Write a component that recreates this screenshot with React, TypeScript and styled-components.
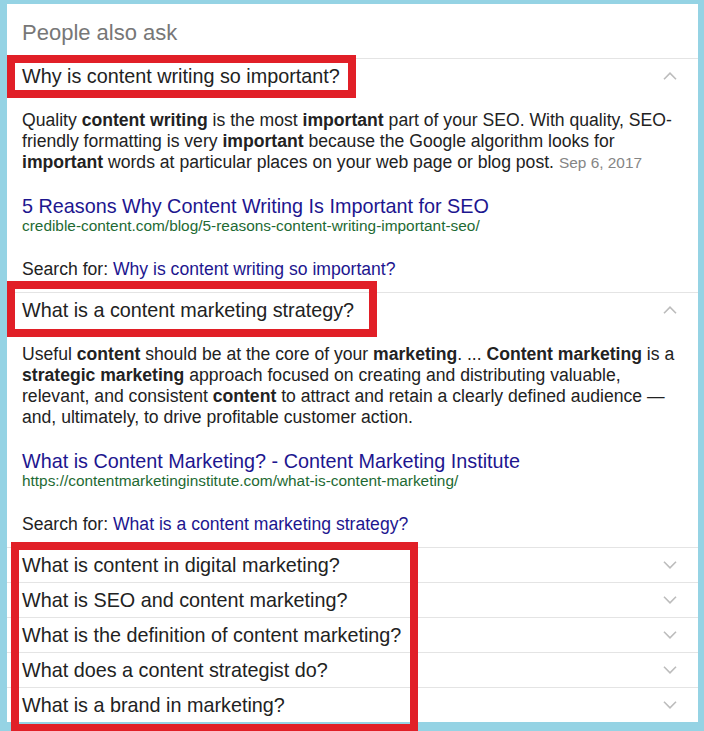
import React from "react";
import styled, { createGlobalStyle } from "styled-components";

const GlobalStyle = createGlobalStyle`
  html, body {
    margin: 0;
    padding: 0;
    background: #95d3e4;
  }
  body {
    font-family: "Liberation Sans", Arial, sans-serif;
  }
`;

const Page = styled.div`
  box-sizing: border-box;
  min-height: 731px;
  padding: 4px 6px 8px 7px;
`;

const Panel = styled.section`
  position: relative;
  background: #ffffff;
`;

const Header = styled.h2`
  margin: 0;
  padding: 16px 15px 12px;
  font-size: 22px;
  line-height: 26px;
  font-weight: normal;
  color: #777777;
  border-bottom: 1px solid #e4e4e4;
`;

const Item = styled.div<{ $last?: boolean }>`
  border-bottom: ${(p) => (p.$last ? "none" : "1px solid #e4e4e4")};
`;

const QuestionRow = styled.div`
  display: flex;
  align-items: center;
  justify-content: space-between;
  height: 34px;
  padding: 0 21px 0 15px;
`;

const QuestionText = styled.span`
  position: relative;
  display: inline-block;
  font-size: 19.8px;
  line-height: 34px;
  color: #222222;
  white-space: nowrap;
`;

const Mark = styled.span<{ $t: number; $r: number; $b: number; $l: number }>`
  position: absolute;
  top: ${(p) => p.$t}px;
  right: ${(p) => p.$r}px;
  bottom: ${(p) => p.$b}px;
  left: ${(p) => p.$l}px;
  border: 8px solid #e11f27;
  pointer-events: none;
`;

const Chevron = styled.svg`
  display: block;
  width: 14px;
  height: 8px;
  flex: none;
`;

const Answer = styled.div`
  padding: 17px 18px 12px 15px;
  font-size: 17.6px;
  line-height: 21px;
  color: #222222;
`;

const Snippet = styled.p`
  margin: 0;
  b {
    font-weight: bold;
  }
`;

const DateStamp = styled.span`
  margin-left: 5px;
  font-size: 15.4px;
  color: #858585;
`;

const SourceTitle = styled.a`
  display: block;
  margin-top: 22px;
  font-size: 19.8px;
  line-height: 22px;
  color: #1d168f;
  text-decoration: none;
`;

const SourceUrl = styled.div`
  font-size: 15.4px;
  line-height: 18px;
  color: #1e6a33;
`;

const SearchFor = styled.div`
  margin-top: 24px;
  a {
    color: #1d168f;
    text-decoration: none;
  }
`;

const CollapsedGroup = styled.div`
  position: relative;
`;

type MarkBox = { t: number; r: number; b: number; l: number };

const ChevronIcon = ({ up }: { up?: boolean }) => (
  <Chevron viewBox="0 0 14 8">
    <polyline
      points={up ? "1,7.2 7,1.2 13,7.2" : "1,0.8 7,6.8 13,0.8"}
      fill="none"
      stroke="#bcbcbc"
      strokeWidth="1.6"
    />
  </Chevron>
);

const Question = ({
  text,
  up,
  mark,
}: {
  text: string;
  up?: boolean;
  mark?: MarkBox;
}) => (
  <QuestionRow>
    <QuestionText>
      {text}
      {mark && <Mark $t={mark.t} $r={mark.r} $b={mark.b} $l={mark.l} />}
    </QuestionText>
    <ChevronIcon up={up} />
  </QuestionRow>
);

const collapsed = [
  "What is content in digital marketing?",
  "What is SEO and content marketing?",
  "What is the definition of content marketing?",
  "What does a content strategist do?",
  "What is a brand in marketing?",
];

export default function App() {
  return (
    <>
      <GlobalStyle />
      <Page>
        <Panel>
          <Header>People also ask</Header>

          <Item>
            <Question
              text="Why is content writing so important?"
              up
              mark={{ t: -4, r: -16, b: -5, l: -15 }}
            />
            <Answer>
              <Snippet>
                Quality <b>content writing</b> is the most <b>important</b> part of your SEO. With
                quality, SEO-friendly formatting is very <b>important</b> because the Google
                algorithm looks for <b>important</b> words at particular places on your web page or
                blog post.<DateStamp>Sep 6, 2017</DateStamp>
              </Snippet>
              <SourceTitle href="#">5 Reasons Why Content Writing Is Important for SEO</SourceTitle>
              <SourceUrl>credible-content.com/blog/5-reasons-content-writing-important-seo/</SourceUrl>
              <SearchFor>
                Search for: <a href="#">Why is content writing so important?</a>
              </SearchFor>
            </Answer>
          </Item>

          <Item>
            <Question
              text="What is a content marketing strategy?"
              up
              mark={{ t: -12, r: -23, b: -10, l: -15 }}
            />
            <Answer>
              <Snippet>
                Useful <b>content</b> should be at the core of your <b>marketing</b>. ...{" "}
                <b>Content marketing</b> is a <b>strategic marketing</b> approach focused on
                creating and distributing valuable, relevant, and consistent <b>content</b> to
                attract and retain a clearly defined audience — and, ultimately, to drive
                profitable customer action.
              </Snippet>
              <SourceTitle href="#">What is Content Marketing? - Content Marketing Institute</SourceTitle>
              <SourceUrl>https://contentmarketinginstitute.com/what-is-content-marketing/</SourceUrl>
              <SearchFor>
                Search for: <a href="#">What is a content marketing strategy?</a>
              </SearchFor>
            </Answer>
          </Item>

          <CollapsedGroup>
            {collapsed.map((q, i) => (
              <Item key={q} $last={i === collapsed.length - 1}>
                <Question text={q} />
              </Item>
            ))}
            <Mark $t={-6} $r={280} $b={-10} $l={4} />
          </CollapsedGroup>
        </Panel>
      </Page>
    </>
  );
}
